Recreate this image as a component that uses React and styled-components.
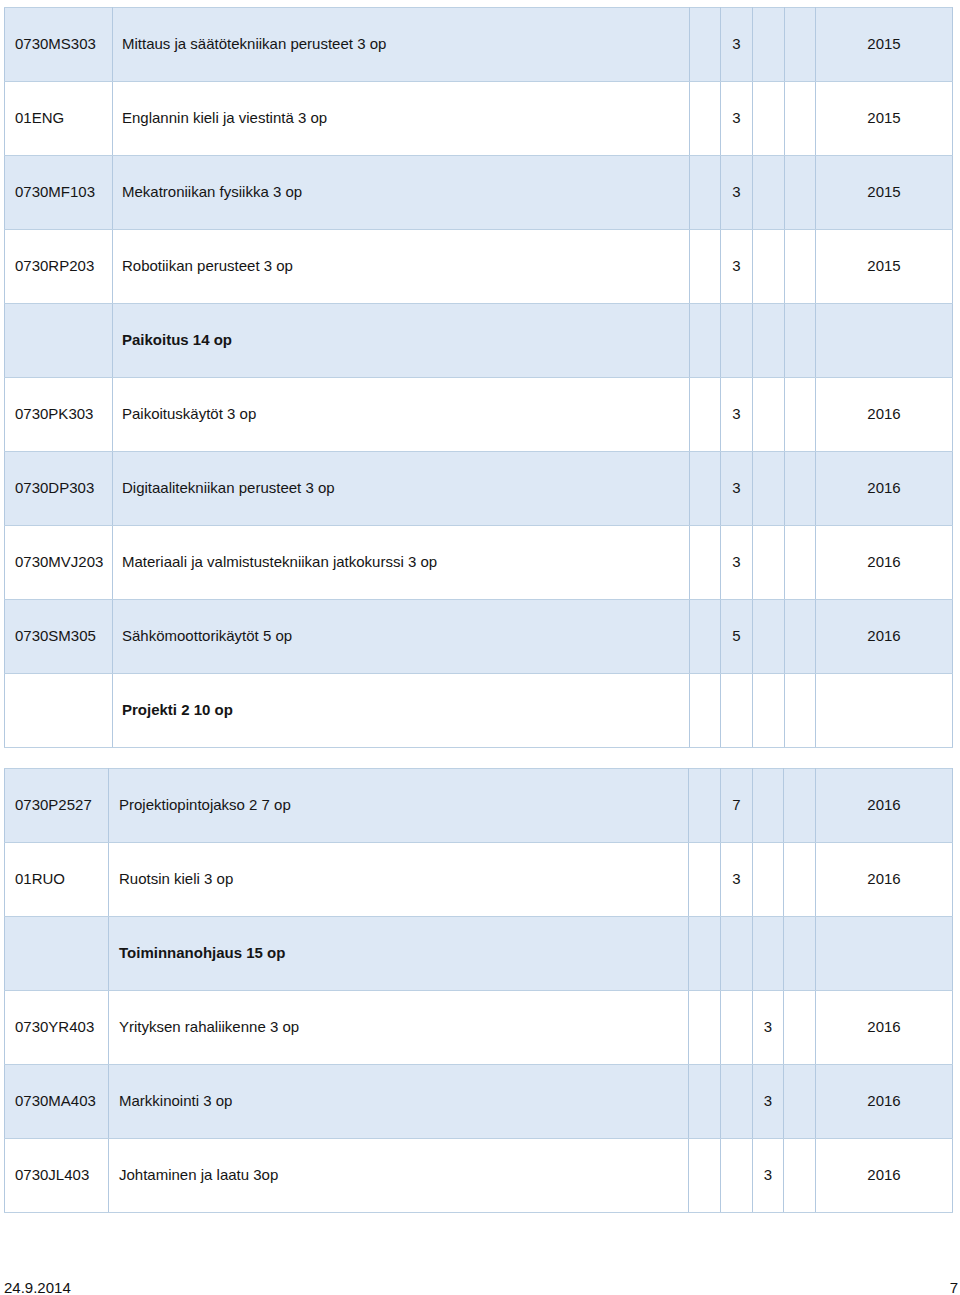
import React from 'react';
import styled, { createGlobalStyle } from 'styled-components';

const GlobalStyle = createGlobalStyle`
  html, body {
    margin: 0;
    padding: 0;
    background: #ffffff;
  }
  body {
    font-family: "Liberation Sans", Arial, Helvetica, sans-serif;
    color: #151515;
  }
`;

const Page = styled.div`
  width: 960px;
  height: 1295px;
  box-sizing: border-box;
  padding: 7px 0 0 4px;
  display: flex;
  flex-direction: column;
  gap: 20px;
`;

const Table = styled.table`
  width: 948px;
  border-collapse: collapse;
  table-layout: fixed;
  font-size: 15px;
  border: 1px solid #bccbdb;
`;

const Row = styled.tr`
  background: ${(p) => (p.$shaded ? '#dde8f5' : '#ffffff')};
`;

const Cell = styled.td`
  height: 74px;
  padding: 0 0 2px ${(p) => p.$indent}px;
  border: 1px solid #b3c9e0;
  border-top-color: #bcd0e3;
  border-bottom-color: #bcd0e3;
  white-space: nowrap;
  overflow: hidden;
  font-weight: ${(p) => (p.$bold ? 700 : 400)};
  box-sizing: border-box;
`;

const NumCell = styled(Cell)`
  padding: 0 0 2px 0;
  text-align: center;
`;

const Footer = styled.div`
  margin-top: 46px;
  display: flex;
  justify-content: space-between;
  font-size: 15px;
  color: #111;
  padding-right: 2px;
`;

const table1 = [
  { code: '0730MS303', name: 'Mittaus ja säätötekniikan perusteet 3 op', col: 1, val: '3', year: '2015' },
  { code: '01ENG', name: 'Englannin kieli ja viestintä 3 op', col: 1, val: '3', year: '2015' },
  { code: '0730MF103', name: 'Mekatroniikan fysiikka 3 op', col: 1, val: '3', year: '2015' },
  { code: '0730RP203', name: 'Robotiikan perusteet 3 op', col: 1, val: '3', year: '2015' },
  { code: '', name: 'Paikoitus 14 op', bold: true },
  { code: '0730PK303', name: 'Paikoituskäytöt 3 op', col: 1, val: '3', year: '2016' },
  { code: '0730DP303', name: 'Digitaalitekniikan perusteet 3 op', col: 1, val: '3', year: '2016' },
  { code: '0730MVJ203', name: 'Materiaali ja valmistustekniikan jatkokurssi 3 op', col: 1, val: '3', year: '2016' },
  { code: '0730SM305', name: 'Sähkömoottorikäytöt 5 op', col: 1, val: '5', year: '2016' },
  { code: '', name: 'Projekti 2 10 op', bold: true },
];

const table2 = [
  { code: '0730P2527', name: 'Projektiopintojakso 2 7 op', col: 1, val: '7', year: '2016' },
  { code: '01RUO', name: 'Ruotsin kieli 3 op', col: 1, val: '3', year: '2016' },
  { code: '', name: 'Toiminnanohjaus 15 op', bold: true },
  { code: '0730YR403', name: 'Yrityksen rahaliikenne 3 op', col: 2, val: '3', year: '2016' },
  { code: '0730MA403', name: 'Markkinointi 3 op', col: 2, val: '3', year: '2016' },
  { code: '0730JL403', name: 'Johtaminen ja laatu 3op', col: 2, val: '3', year: '2016' },
];

const CourseTable = ({ rows, widths, nameIndent }) => (
  <Table>
    <colgroup>
      {widths.map((w, i) => (
        <col key={i} style={{ width: w }} />
      ))}
    </colgroup>
    <tbody>
      {rows.map((r, i) => (
        <Row key={i} $shaded={i % 2 === 0}>
          <Cell $indent={10}>{r.code}</Cell>
          <Cell $indent={nameIndent} $bold={r.bold}>{r.name}</Cell>
          {[0, 1, 2, 3].map((c) => (
            <NumCell key={c}>{r.col === c ? r.val : ''}</NumCell>
          ))}
          <NumCell>{r.year || ''}</NumCell>
        </Row>
      ))}
    </tbody>
  </Table>
);

export default function App() {
  return (
    <>
      <GlobalStyle />
      <Page>
        <CourseTable rows={table1} widths={[108, 577, 31, 32, 32, 31, 137]} nameIndent={9} />
        <CourseTable rows={table2} widths={[104, 580, 32, 32, 31, 32, 137]} nameIndent={10} />
        <Footer>
          <span>24.9.2014</span>
          <span>7</span>
        </Footer>
      </Page>
    </>
  );
}
